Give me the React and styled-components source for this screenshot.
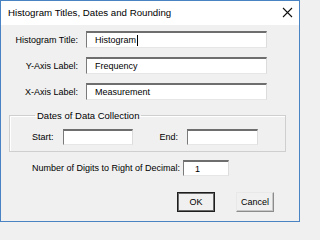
import React, {useState} from 'react';
import styled, {createGlobalStyle} from 'styled-components';

const GlobalStyle = createGlobalStyle`
  html, body {
    margin: 0;
    padding: 0;
    background: #f0f0f0;
  }
  * { box-sizing: border-box; }
`;

const Dialog = styled.div`
  width: 300px;
  height: 222px;
  border: 1px solid #4a83c4;
  background: #f0f0f0;
  display: flex;
  flex-direction: column;
  font-family: "Liberation Sans", Arial, sans-serif;
  font-size: 9px;
  color: #000;
`;

const TitleBar = styled.div`
  height: 24px;
  flex: none;
  background: #fff;
  display: flex;
  align-items: center;
  justify-content: space-between;
  padding: 0 6px 1px 7px;
  font-size: 9.7px;
`;

const CloseButton = styled.div`
  width: 12px;
  height: 12px;
  display: flex;
  align-items: center;
  justify-content: center;
`;

const Body = styled.div`
  flex: 1;
  padding: 6px 13px 0 7px;
  display: flex;
  flex-direction: column;
`;

const FieldRow = styled.div`
  display: flex;
  align-items: center;
  height: 17px;
  margin-bottom: 9px;
`;

const Label = styled.label`
  width: ${p => p.width || 70}px;
  text-align: ${p => p.align || 'right'};
  margin-right: ${p => p.gap || 8}px;
  white-space: nowrap;
  flex: none;
`;

const TextBox = styled.div`
  width: ${p => p.width}px;
  height: ${p => p.height || 17}px;
  flex: none;
  background: #fff;
  border-top: 2px solid #6e6e6e;
  border-left: 1px solid #7a7a7a;
  border-right: 1px solid #dcdcdc;
  border-bottom: 1px solid #e6e6e6;
  display: flex;
  align-items: center;
  padding-left: ${p => p.indent || 8}px;
  font-size: 9px;
`;

const Caret = styled.span`
  display: inline-block;
  width: 1px;
  height: 11px;
  background: #000;
  margin-left: 1px;
`;

const Group = styled.fieldset`
  margin: 1px 0 0 1px;
  padding: 0 0 6px 22px;
  border: 1px solid #cfcfcf;
  box-shadow: inset 1px 1px 0 #fff;
`;

const Legend = styled.legend`
  padding: 0 2px;
  margin-left: 3px;
  font-size: 9.5px;
  line-height: 11px;
`;

const GroupRow = styled.div`
  display: flex;
  align-items: center;
  height: 16px;
  margin-top: 8px;
`;

const DigitsRow = styled.div`
  display: flex;
  align-items: center;
  margin: 8px 0 0 24px;
  height: 16px;
`;

const ButtonBar = styled.div`
  display: flex;
  justify-content: flex-end;
  gap: 21px;
  margin-top: 16px;
  padding-right: 12px;
`;

const Button = styled.button`
  width: 38px;
  height: 20px;
  padding: 0;
  font-family: "Liberation Sans", Arial, sans-serif;
  font-size: 9px;
  color: #000;
  background: #f0f0f0;
  border: 1px solid;
  border-color: ${p => p.primary ? '#1e1e1e' : '#e8e8e8 #8c8c8c #8c8c8c #e8e8e8'};
  box-shadow: ${p => p.primary ? 'inset 0 0 0 1px #6a6a6a' : 'inset -1px -1px 0 #c8c8c8'};
  cursor: pointer;
`;

const CloseIcon = () => (
  <svg width="11" height="11" viewBox="0 0 11 11">
    <path d="M1 1 L10 10 M10 1 L1 10" stroke="#111" strokeWidth="1.1" fill="none" />
  </svg>
);

const App = () => {
    const [title] = useState('Histogram');
    const [yLabel] = useState('Frequency');
    const [xLabel] = useState('Measurement');

    return (
        <>
            <GlobalStyle />
            <Dialog>
                <TitleBar>
                    <span>Histogram Titles, Dates and Rounding</span>
                    <CloseButton><CloseIcon /></CloseButton>
                </TitleBar>
                <Body>
                    <FieldRow>
                        <Label width={70}>Histogram Title:</Label>
                        <TextBox width={181}>{title}<Caret /></TextBox>
                    </FieldRow>
                    <FieldRow>
                        <Label width={70}>Y-Axis Label:</Label>
                        <TextBox width={181}>{yLabel}</TextBox>
                    </FieldRow>
                    <FieldRow>
                        <Label width={70}>X-Axis Label:</Label>
                        <TextBox width={181}>{xLabel}</TextBox>
                    </FieldRow>

                    <Group>
                        <Legend>Dates of Data Collection</Legend>
                        <GroupRow>
                            <Label width={22} align="left" gap={9}>Start:</Label>
                            <TextBox width={70} height={16} />
                            <Label width={45} gap={9}>End:</Label>
                            <TextBox width={71} height={16} />
                        </GroupRow>
                    </Group>

                    <DigitsRow>
                        <Label width={148} align="left" gap={3}>Number of Digits to Right of Decimal:</Label>
                        <TextBox width={46} height={16} indent={11}>1</TextBox>
                    </DigitsRow>

                    <ButtonBar>
                        <Button primary>OK</Button>
                        <Button>Cancel</Button>
                    </ButtonBar>
                </Body>
            </Dialog>
        </>
    );
};

export default App;
